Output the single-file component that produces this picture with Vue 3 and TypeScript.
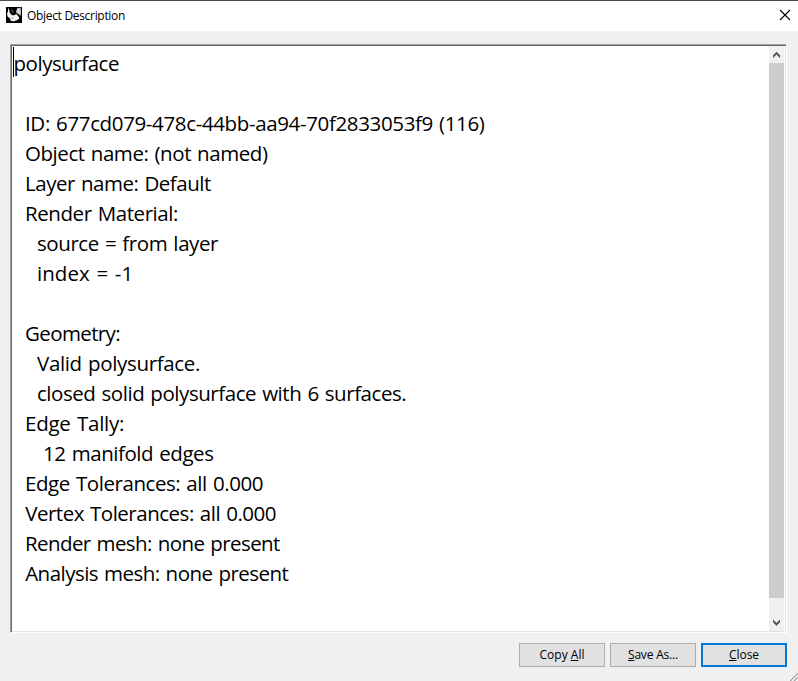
<script setup lang="ts">
interface Line {
  text: string
  indent: number
  width: number
}

const font = '"Open Sans", "Noto Sans", sans-serif'

const lines: Line[] = [
  { text: 'polysurface', indent: 0.5, width: 105.5 },
  { text: '', indent: 0, width: 0 },
  { text: 'ID: 677cd079-478c-44bb-aa94-70f2833053f9 (116)', indent: 12, width: 459.5 },
  { text: 'Object name: (not named)', indent: 12, width: 242.5 },
  { text: 'Layer name: Default', indent: 12, width: 185.8 },
  { text: 'Render Material:', indent: 12, width: 153 },
  { text: 'source = from layer', indent: 24, width: 181 },
  { text: 'index = -1', indent: 24, width: 96.2 },
  { text: '', indent: 0, width: 0 },
  { text: 'Geometry:', indent: 12, width: 95 },
  { text: 'Valid polysurface.', indent: 24, width: 163 },
  { text: 'closed solid polysurface with 6 surfaces.', indent: 24, width: 369.2 },
  { text: 'Edge Tally:', indent: 12, width: 99.2 },
  { text: '12 manifold edges', indent: 30, width: 170.5 },
  { text: 'Edge Tolerances: all 0.000', indent: 12, width: 238 },
  { text: 'Vertex Tolerances: all 0.000', indent: 12.2, width: 250.8 },
  { text: 'Render mesh: none present', indent: 12, width: 254.8 },
  { text: 'Analysis mesh: none present', indent: 12.2, width: 263.2 },
]

const buttons = [
  { before: 'Copy ', key: 'A', after: 'll', width: 45, primary: false },
  { before: '', key: 'S', after: 'ave As...', width: 50, primary: false },
  { before: '', key: 'C', after: 'lose', width: 30, primary: true },
]

// Distribute the difference between natural and wanted width over the letters.
const ctx = document.createElement('canvas').getContext('2d')
function spacing(text: string, size: number, width: number, wordSpacing = 0): string {
  if (!ctx || !text) return '0px'
  ctx.font = `${size}px ${font}`
  const gaps = (text.split(' ').length - 1) * wordSpacing
  return `${((width - gaps - ctx.measureText(text).width) / text.length).toFixed(3)}px`
}
</script>

<template>
  <div class="dialog">
    <header class="titlebar">
      <svg class="logo" viewBox="0 0 16 16" aria-hidden="true">
        <rect width="16" height="16" fill="#000" />
        <path d="M2.2 1 3.2 2.5 3.5 5 5 7.5 7.5 8.5 10.5 7 12 9 13.5 11 11.5 13 7 14.5 4.5 13.5 4 11.5 1.5 9.5 1 6.5 2 4.5z" fill="#f4f4f4" />
        <path d="M11 1.5 14.5 .5 15 5 14.5 9 12.5 7 10 5.5z" fill="#d8d8d8" />
        <path d="M5 2 7.5 4 6.5 6z" fill="#666" />
        <path d="M3 10.5 6 11 8 10 7 12z" fill="#999" />
      </svg>
      <h1 class="title" :style="{ letterSpacing: spacing('Object Description', 12, 98) }">Object Description</h1>
      <svg class="x" viewBox="0 0 10 10" aria-label="Close">
        <path d="M0 0 10 10M10 0 0 10" stroke="#000" stroke-width="1.1" />
      </svg>
    </header>

    <main class="field">
      <div class="text">
        <span class="caret" />
        <div
          v-for="(line, i) in lines"
          :key="i"
          class="line"
          :style="{ paddingLeft: line.indent + 'px', letterSpacing: spacing(line.text, 20.5, line.width, 1.2) }"
        >{{ line.text }}</div>
      </div>
      <div class="scrollbar">
        <svg class="arrow" viewBox="0 0 15 17"><path d="M4 12V9.2L7.5 5.8 11 9.2V12L7.5 8.6z" fill="#505050" /></svg>
        <div class="thumb" />
        <svg class="arrow down" viewBox="0 0 15 17"><path d="M4 5.5V8.3L7.5 11.7 11 8.3V5.5L7.5 8.9z" fill="#505050" /></svg>
      </div>
    </main>

    <footer class="actions">
      <button
        v-for="b in buttons"
        :key="b.key"
        class="button"
        :class="{ primary: b.primary }"
        :style="{ letterSpacing: spacing(b.before + b.key + b.after, 12, b.width) }"
      ><span>{{ b.before }}<u>{{ b.key }}</u>{{ b.after }}</span></button>
    </footer>

    <svg class="grip" viewBox="0 0 8 8">
      <path d="M0 8 8 0M4 8 8 4" stroke="#a0a0a0" stroke-width="1.5" />
      <path d="M-1.5 8 8-1.5M2.3 8 8 2.3M6.3 8 8 6.3" stroke="#fff" stroke-width="1" />
    </svg>
  </div>
</template>

<style>
body { margin: 0; }
</style>

<style scoped>
.dialog {
  position: relative;
  box-sizing: border-box;
  width: 798px;
  height: 681px;
  overflow: hidden;
  display: flex;
  flex-direction: column;
  border-top: 1px solid #4b4b50;
  background: #f0f0f0;
  color: #000;
  font-family: "Open Sans", "Noto Sans", sans-serif;
}
.titlebar {
  box-sizing: border-box;
  height: 30px;
  padding: 0 8px 2px 6px;
  display: flex;
  align-items: center;
  background: #fff;
}
.logo { width: 16px; height: 16px; margin-right: 5px; }
.title { margin: 0; flex: 1; padding-top: 2px; font-size: 12px; line-height: 16px; font-weight: 400; white-space: nowrap; }
.x { width: 10px; height: 10px; overflow: visible; }
.field {
  box-sizing: border-box;
  width: 777px;
  height: 589px;
  margin: 13px 0 0 10px;
  display: flex;
  border: 1px solid;
  border-color: #a0a0a0 #fff #fff #a0a0a0;
  background: #fff;
  box-shadow: inset 1px 1px #696969, inset -1px -1px #e3e3e3;
  padding: 1px;
}
.text { position: relative; flex: 1; padding: 2px 0 0 1px; }
.caret { position: absolute; left: 1px; top: 1px; width: 1px; height: 30px; background: #000; }
.line { height: 30px; font-size: 20.5px; line-height: 30px; white-space: pre; word-spacing: 1.2px; }
.scrollbar { width: 15px; margin-right: 1px; display: flex; flex-direction: column; background: #f0f0f0; }
.arrow { width: 15px; height: 17px; flex: none; }
.thumb { height: 535px; background: #cdcdcd; }
.down { margin-top: auto; }
.actions { display: flex; justify-content: flex-end; gap: 5px; padding: 10px 11px 0 0; }
.button {
  box-sizing: border-box;
  width: 86px;
  height: 24px;
  padding: 0;
  border: 1px solid #adadad;
  border-radius: 0;
  background: #e1e1e1;
  color: #000;
  font-family: inherit;
  font-size: 12px;
  line-height: 16px;
}
.primary { border: 2px solid #0078d7; }
.button u { text-decoration-thickness: 1px; text-underline-offset: 1px; text-decoration-skip-ink: none; }
.grip { position: absolute; right: 0; bottom: 0; width: 8px; height: 8px; }
</style>
